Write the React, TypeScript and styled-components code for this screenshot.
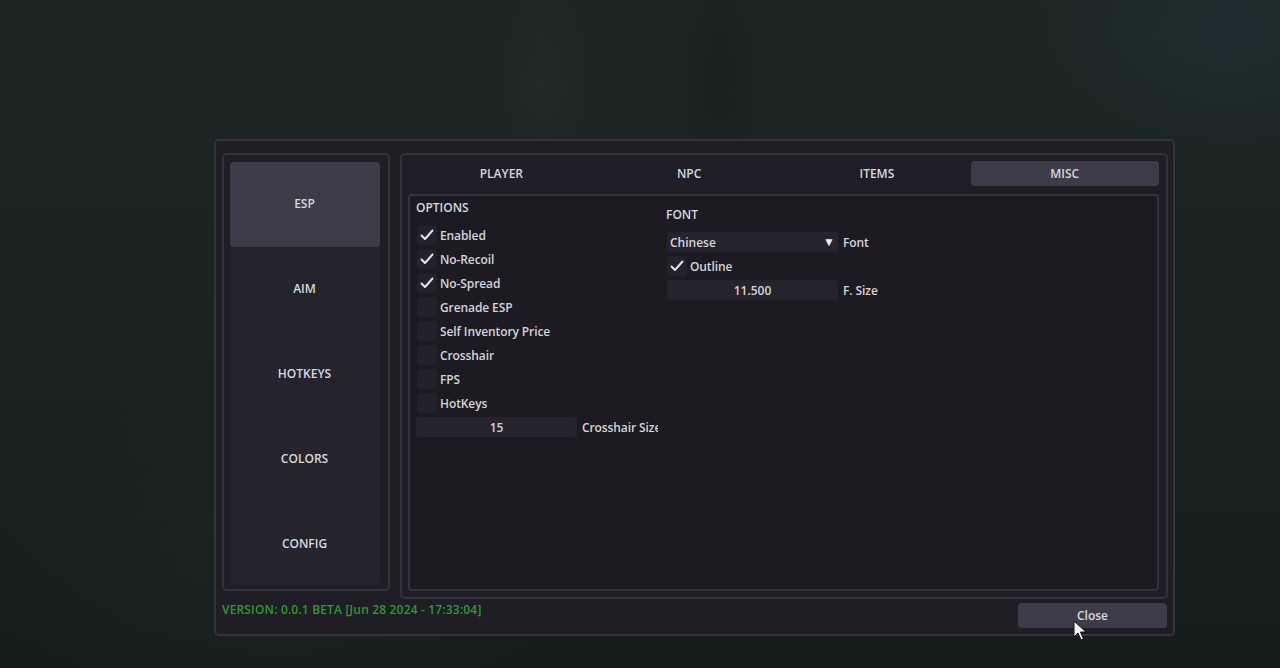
import React from "react";
import styled, { createGlobalStyle } from "styled-components";

const Global = createGlobalStyle`
  html, body { margin: 0; padding: 0; }
  body {
    width: 1280px; height: 668px; overflow: hidden;
    background:
      radial-gradient(ellipse 60px 120px at 545px 85px, rgba(45,56,54,0.3), transparent 80%),
      radial-gradient(ellipse 55px 130px at 720px 70px, rgba(10,16,15,0.25), transparent 80%),
      radial-gradient(ellipse 260px 180px at 1230px 30px, rgba(36,54,64,0.45), transparent 75%),
      radial-gradient(ellipse 400px 250px at 280px 560px, rgba(30,42,40,0.4), transparent 75%),
      linear-gradient(180deg, #1d2624 0%, #1a2321 55%, #161e1d 100%);
    font-family: "Open Sans", "Noto Sans", "Liberation Sans", sans-serif;
    color: #d4d4da;
  }
`;

const Page = styled.div`
  position: relative;
  width: 1280px;
  height: 668px;
  padding: 139px 0 0 214px;
  box-sizing: border-box;
`;

const Window = styled.div`
  width: 961px;
  height: 497px;
  box-sizing: border-box;
  border: 2px solid #34333d;
  border-radius: 5px;
  background: #1f1e25;
  padding: 12px 5px 0 6px;
  display: flex;
  flex-direction: column;
`;

const Body = styled.div`
  display: grid;
  grid-template-columns: 168px 768px;
  column-gap: 10px;
  align-items: start;
`;

const Frame = styled.div<{ $h: number }>`
  box-sizing: border-box;
  height: ${(p) => p.$h}px;
  border: 2px solid #33323c;
  border-radius: 5px;
  background: #1f1e25;
`;

const SideFrame = styled(Frame)`
  padding: 7px 8px 0 6px;
`;

const SideList = styled.div`
  background: #25242d;
  border-radius: 4px;
  height: 423px;
  display: flex;
  flex-direction: column;
`;

const SideItem = styled.div<{ $active?: boolean }>`
  height: 85px;
  flex: none;
  display: flex;
  align-items: center;
  justify-content: center;
  border-radius: 4px;
  background: ${(p) => (p.$active ? "#3d3c48" : "transparent")};
  font-size: 12px;
  font-weight: 600;
  color: #d8d8de;
  padding: 0 1px 2px 0;
  box-sizing: border-box;
`;

const MainFrame = styled(Frame)`
  padding: 6px 7px 0 6px;
  display: flex;
  flex-direction: column;
  gap: 8px;
`;

const Tabs = styled.div`
  display: grid;
  grid-template-columns: repeat(4, 1fr);
  height: 25px;
  background: #201f27;
  border-radius: 4px;
`;

const Tab = styled.div<{ $active?: boolean }>`
  display: flex;
  align-items: center;
  justify-content: center;
  border-radius: 4px;
  background: ${(p) => (p.$active ? "#3d3c49" : "transparent")};
  font-size: 12px;
  font-weight: 600;
  color: #d8d8de;
  padding-right: 1px;
`;

const Content = styled.div`
  box-sizing: border-box;
  height: 397px;
  border: 2px solid #34333d;
  border-radius: 4px;
  background: #1c1b22;
  padding: 2px 0 0 6px;
  display: flex;
  gap: 8px;
`;

const Column = styled.div<{ $w: number; $top: number }>`
  width: ${(p) => p.$w}px;
  padding-top: ${(p) => p.$top}px;
  display: flex;
  flex-direction: column;
  gap: 4px;
  overflow: hidden;
`;

const Header = styled.div`
  height: 20px;
  line-height: 20px;
  font-size: 12px;
  font-weight: 600;
  color: #d8d8de;
  margin-bottom: 3px;
`;

const Row = styled.div`
  height: 20px;
  display: flex;
  align-items: center;
  gap: 3px;
  white-space: nowrap;
`;

const Box = styled.div`
  width: 20px;
  height: 20px;
  margin-left: 1px;
  flex: none;
  background: #23222a;
  border-radius: 2px;
  display: flex;
  align-items: center;
  justify-content: center;
`;

const Label = styled.span`
  font-size: 12px;
  font-weight: 600;
  letter-spacing: -0.1px;
  color: #d4d4da;
  white-space: nowrap;
`;

const Field = styled.div<{ $w: number }>`
  width: ${(p) => p.$w}px;
  height: 20px;
  flex: none;
  background: #25242d;
  border-radius: 2px;
  display: flex;
  align-items: center;
  justify-content: center;
  font-size: 12px;
  font-weight: 600;
  color: #d4d4da;
  margin-right: 2px;
`;

const Combo = styled(Field)`
  justify-content: space-between;
  padding: 0 3px 0 3px;
  box-sizing: border-box;
  margin-left: 1px;
`;

const Arrow = styled.span`
  font-size: 12px;
  line-height: 1;
  color: #ececf2;
`;

const Footer = styled.div`
  display: flex;
  align-items: flex-start;
  justify-content: space-between;
  margin-top: 4px;
  padding-right: 1px;
`;

const Version = styled.div`
  margin-top: -2px;
  font-size: 12px;
  font-weight: 600;
  letter-spacing: 0.17px;
  color: #2c9a2c;
`;

const CloseBtn = styled.div`
  width: 149px;
  height: 25px;
  border-radius: 4px;
  background: #3d3c48;
  display: flex;
  align-items: center;
  justify-content: center;
  font-size: 12px;
  font-weight: 600;
  color: #d8d8de;
`;

const Cursor = styled.svg`
  position: absolute;
  left: 1073px;
  top: 620px;
`;

const Check = () => (
  <svg width="14" height="12" viewBox="0 0 14 12">
    <path d="M1.5 6.5 L5 10 L12.5 1.5" fill="none" stroke="#e4e4ea" strokeWidth="2" strokeLinecap="round" strokeLinejoin="round" />
  </svg>
);

const options: [string, boolean][] = [
  ["Enabled", true],
  ["No-Recoil", true],
  ["No-Spread", true],
  ["Grenade ESP", false],
  ["Self Inventory Price", false],
  ["Crosshair", false],
  ["FPS", false],
  ["HotKeys", false],
];

export default function App() {
  return (
    <>
      <Global />
      <Page>
        <Window>
          <Body>
            <SideFrame $h={438}>
              <SideList>
                <SideItem $active>ESP</SideItem>
                <SideItem>AIM</SideItem>
                <SideItem>HOTKEYS</SideItem>
                <SideItem>COLORS</SideItem>
                <SideItem>CONFIG</SideItem>
              </SideList>
            </SideFrame>
            <MainFrame $h={446}>
              <Tabs>
                <Tab>PLAYER</Tab>
                <Tab>NPC</Tab>
                <Tab>ITEMS</Tab>
                <Tab $active>MISC</Tab>
              </Tabs>
              <Content>
                <Column $w={242} $top={0}>
                  <Header>OPTIONS</Header>
                  {options.map(([name, on]) => (
                    <Row key={name}>
                      <Box>{on && <Check />}</Box>
                      <Label>{name}</Label>
                    </Row>
                  ))}
                  <Row>
                    <Field $w={161}>15</Field>
                    <Label>Crosshair Size</Label>
                  </Row>
                </Column>
                <Column $w={300} $top={7}>
                  <Header>FONT</Header>
                  <Row>
                    <Combo $w={171}>
                      <span>Chinese</span>
                      <Arrow>▼</Arrow>
                    </Combo>
                    <Label>Font</Label>
                  </Row>
                  <Row>
                    <Box>
                      <Check />
                    </Box>
                    <Label>Outline</Label>
                  </Row>
                  <Row>
                    <Field $w={171} style={{ marginLeft: 1 }}>11.500</Field>
                    <Label>F. Size</Label>
                  </Row>
                </Column>
              </Content>
            </MainFrame>
          </Body>
          <Footer>
            <Version>VERSION: 0.0.1 BETA [Jun 28 2024 - 17:33:04]</Version>
            <CloseBtn>Close</CloseBtn>
          </Footer>
        </Window>
        <Cursor width="16" height="22" viewBox="0 0 16 22">
          <path d="M1 1 L1 17 L5 13 L8 20 L10.5 19 L7.5 12 L13 12 Z" fill="#f4f4f4" stroke="#111" strokeWidth="1" strokeLinejoin="round" />
        </Cursor>
      </Page>
    </>
  );
}
